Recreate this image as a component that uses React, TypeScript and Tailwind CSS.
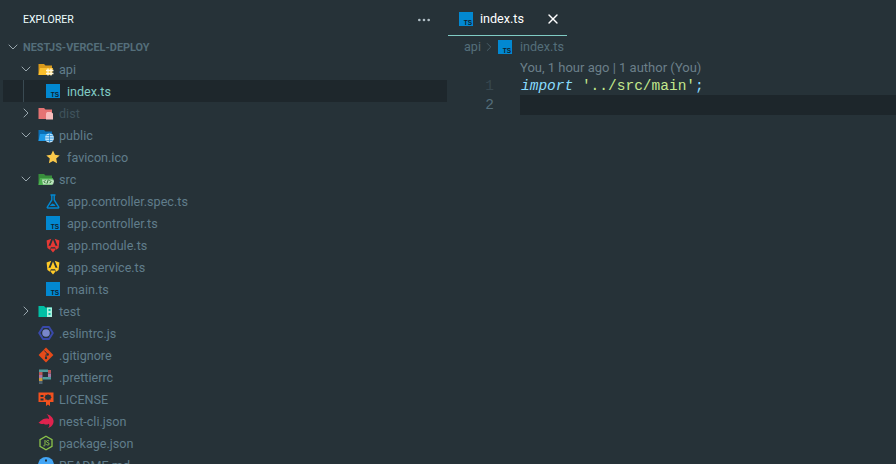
import { ChevronDown, ChevronRight, Ellipsis, X } from "lucide-react";
import type { ReactNode } from "react";

const TsIcon = ({ size = 14 }: { size?: number }) => (
  <svg width={size} height={size} viewBox="0 0 14 14">
    <rect width="14" height="14" fill="#0288d1" />
    <text x="13" y="12.5" textAnchor="end" fontSize="6.5" fontWeight="700" fontFamily="Liberation Sans, sans-serif" fill="#10222e">
      TS
    </text>
  </svg>
);

const Folder = ({ color, back, children }: { color: string; back?: string; children?: ReactNode }) => (
  <svg width="16" height="16" viewBox="0 0 16 16">
    <path d="M0.500 3h5.500l1.500 1.500H14V14H.5z" fill={back ?? color} />
    {back && <path d="M0.500 14l1.500-7h13l-1 7z" fill={color} />}
    {children}
  </svg>
);

const AngularIcon = ({ color }: { color: string }) => (
  <svg width="14" height="15" viewBox="0 0 14 15">
    <path d="M5.300.8.600 2.500l.8 7.500L4 11.800l.9-2.500h4.200l.9 2.500 2.600-1.800.8-7.500L8.700.8 11.500 7.800H9.500L7 1.500 4.500 7.800H2.500z" fill={color} />
    <path d="M5.700 7.800 7 4.500l1.300 3.300zM4.800 10.600h4.400l.3.900L7 14.400l-2.500-2.900z" fill={color} />
  </svg>
);

const icons: Record<string, ReactNode> = {
  api: (
    <Folder color="#fbc02d" back="#d99a1c">
      <path d="M8 9.500h7.500M8 12.500h7.500M10 7.500v7M13 7.500v7" stroke="#fff6dc" strokeWidth="1.300" />
    </Folder>
  ),
  dist: (
    <Folder color="#e57373">
      <path d="M8 8.500l1-1.500h4l2 1.500V14.500H8z" fill="#f7bcbc" />
    </Folder>
  ),
  public: (
    <Folder color="#1e9ae8" back="#0b6fb5">
      <circle cx="11.500" cy="11" r="4.500" fill="#bfe3f9" />
      <path d="M7 11h9M11.500 6.500v9M8.300 8.500h6.400M8.300 13.500h6.400" stroke="#1e88d5" strokeWidth=".7" />
    </Folder>
  ),
  src: (
    <Folder color="#4caf50" back="#388e3c">
      <path d="M4 8.500h11.500l.5 2-1 3H5z" fill="#b9e3bb" />
      <path d="M7.500 9.200l-1.500 1.500 1.500 1.500M11.500 9.200l1.500 1.500-1.500 1.500M10.300 8.700l-1.400 4" stroke="#1b5e20" strokeWidth=".9" fill="none" />
    </Folder>
  ),
  test: (
    <Folder color="#00bfa5">
      <rect x="9" y="4.500" width="5" height="9.500" fill="#a8f0de" />
      <path d="M10.500 6h2v2h-2zM10.500 10h2v2h-2z" fill="#00bfa5" />
    </Folder>
  ),
  star: (
    <svg width="14" height="14" viewBox="0 0 14 14">
      <path d="M7 .5l2 4.300 4.700.6-3.500 3.200.9 4.700L7 11l-4.100 2.300.9-4.700L.3 5.400 5 4.800z" fill="#fbc94a" />
    </svg>
  ),
  flask: (
    <svg width="14" height="15" viewBox="0 0 14 15">
      <path d="M4.500 1h5M5.800 1v5L1.300 13c-.3.500 0 1 .5 1h10.400c.5 0 .8-.5.500-1L8.200 6V1" stroke="#0288d1" strokeWidth="1.400" fill="none" />
      <path d="M4.500 11l2-1.500 2 1 1 1.500h-5.500z" fill="#0288d1" />
    </svg>
  ),
  eslint: (
    <svg width="16" height="16" viewBox="0 0 16 16">
      <path d="M5 2h6l3.800 6-3.800 6H5L1.200 8z" stroke="#3949ab" strokeWidth="2" fill="#263238" strokeLinejoin="round" />
      <circle cx="8" cy="8" r="3.800" fill="#7986cb" />
    </svg>
  ),
  git: (
    <svg width="16" height="16" viewBox="0 0 16 16">
      <path d="M8 .6l7.400 7.400L8 15.400.6 8z" fill="#e64a19" strokeLinejoin="round" />
      <path d="M6.300 3.500l3.200 3.500M8 7.500v4" stroke="#263238" strokeWidth="1" />
      <circle cx="9.700" cy="7.500" r="1.200" fill="#263238" />
      <circle cx="8" cy="11" r="1.200" fill="#263238" />
    </svg>
  ),
  prettier: (
    <svg width="16" height="16" viewBox="0 0 16 16">
      <path d="M1 .5h9v2.500H1z" fill="#4f9c9d" />
      <path d="M10 1h3v3.500h-3z" fill="#b95a5a" />
      <path d="M1 3h3.500v3H1z" fill="#b95a5a" />
      <path d="M10 4.500h3V8h-3z" fill="#a577a5" />
      <path d="M1 6h3.500v3H1z" fill="#a577a5" />
      <path d="M1 9h3.500v3H1z" fill="#c99c3c" />
      <path d="M4.500 8H13v2.500H4.500z" fill="#4f9c9d" />
      <path d="M1 12h3.500v3H1z" fill="#4d616e" />
    </svg>
  ),
  license: (
    <svg width="16" height="16" viewBox="0 0 16 16">
      <path d="M.5 1.500h15V11H12v4l-2-1.500L8 15v-4H.5z" fill="#f4511e" />
      <path d="M2.500 4h3v2h-3zM2.500 7.500h3v2h-3z" fill="#263238" />
      <path d="M10 3l1 1 1.500-.2.200 1.500 1 1-1 1-.2 1.500-1.500-.2-1 1-1-1-1.500.2-.2-1.500-1-1 1-1 .2-1.500L9 4z" fill="#263238" />
    </svg>
  ),
  nest: (
    <svg width="16" height="16" viewBox="0 0 16 16">
      <path d="M8.500 1c3.500.8 6.500 3.500 7 6.500.5 3.500-2 6.800-5.500 7.500 1.500-1.500 1.800-3 .8-4.300-1.500 1.200-3.800 1.200-5 0C4.500 11.500 2.500 11 .5 9.500c1.500-.3 2.500-2.200 4.500-3.200 2-1 4.500-.8 6-.3C11 4 10 2.300 8.500 1z" fill="#e0234e" />
    </svg>
  ),
  node: (
    <svg width="16" height="16" viewBox="0 0 16 16">
      <path d="M8 1.200l6 3.400v6.800l-6 3.400-6-3.400V4.600z" stroke="#8bc34a" strokeWidth="1.300" fill="none" />
      <path d="M7 5v5c0 1-1 1.200-1.700.7M11 6c-1-.8-2.500-.6-2.500.5 0 1.500 2.700.8 2.700 2.500 0 1.200-1.800 1.300-2.900.5" stroke="#8bc34a" strokeWidth="1" fill="none" />
    </svg>
  ),
  info: (
    <svg width="16" height="16" viewBox="0 0 16 16">
      <circle cx="8" cy="8" r="8" fill="#42a5f5" />
      <rect x="7" y="2.500" width="2" height="2" fill="#263238" />
    </svg>
  ),
};

type Row = {
  name: string;
  depth: 1 | 2;
  open?: boolean;
  icon: ReactNode;
  muted?: boolean;
  selected?: boolean;
};

const rows: Row[] = [
  { name: "api", depth: 1, open: true, icon: icons.api },
  { name: "index.ts", depth: 2, icon: <TsIcon />, selected: true },
  { name: "dist", depth: 1, open: false, icon: icons.dist, muted: true },
  { name: "public", depth: 1, open: true, icon: icons.public },
  { name: "favicon.ico", depth: 2, icon: icons.star },
  { name: "src", depth: 1, open: true, icon: icons.src },
  { name: "app.controller.spec.ts", depth: 2, icon: icons.flask },
  { name: "app.controller.ts", depth: 2, icon: <TsIcon /> },
  { name: "app.module.ts", depth: 2, icon: <AngularIcon color="#e53935" /> },
  { name: "app.service.ts", depth: 2, icon: <AngularIcon color="#ffca28" /> },
  { name: "main.ts", depth: 2, icon: <TsIcon /> },
  { name: "test", depth: 1, open: false, icon: icons.test },
  { name: ".eslintrc.js", depth: 1, icon: icons.eslint },
  { name: ".gitignore", depth: 1, icon: icons.git },
  { name: ".prettierrc", depth: 1, icon: icons.prettier },
  { name: "LICENSE", depth: 1, icon: icons.license },
  { name: "nest-cli.json", depth: 1, icon: icons.nest },
  { name: "package.json", depth: 1, icon: icons.node },
  { name: "README.md", depth: 1, icon: icons.info },
];

function TreeRow({ row }: { row: Row }) {
  const textColor = row.selected ? "text-[#80cbc4]" : row.muted ? "text-[#3f525c]" : "text-[#607d8b]";

  return (
    <div className={`relative ml-[3px] mr-px flex h-[22px] shrink-0 items-center ${row.selected ? "bg-[#1e272c]" : ""}`}>
      {row.depth === 1 ? (
        <div className="flex w-[35px] shrink-0 items-center pl-[15px]">
          {row.open === true && <ChevronDown size={16} strokeWidth={1.25} className="text-[#b0bec5]" />}
          {row.open === false && <ChevronRight size={16} strokeWidth={1.25} className="text-[#b0bec5]" />}
        </div>
      ) : (
        <div className="w-[43px] shrink-0" />
      )}
      {row.selected && <div className="absolute left-[20px] top-0 h-full w-px bg-[#3a4a52]" />}
      <div className="flex w-[21px] shrink-0 items-center">{row.icon}</div>
      <span className={`mt-[2px] text-[12.6px] leading-[18px] ${textColor}`}>{row.name}</span>
    </div>
  );
}

export default function App() {
  return (
    <div className="flex h-[464px] w-[896px] overflow-hidden bg-[#263238] font-['Roboto',sans-serif]">
      <aside className="flex w-[448px] shrink-0 flex-col">
        <div className="flex h-[36px] shrink-0 items-center justify-between pl-[23px] pr-[16px] pt-[3px]">
          <span className="text-[10.5px] text-[#eeffff]">EXPLORER</span>
          <Ellipsis size={16} className="text-[#b0bec5]" />
        </div>
        <div className="flex h-[22px] shrink-0 items-center pl-[5px]">
          <ChevronDown size={16} strokeWidth={1.25} className="mr-[2px] text-[#b0bec5]" />
          <span className="mt-[2px] text-[10.9px] font-bold text-[#546e7a]">NESTJS-VERCEL-DEPLOY</span>
        </div>
        {rows.map((row) => (
          <TreeRow key={row.name} row={row} />
        ))}
      </aside>

      <main className="flex min-w-0 flex-1 flex-col">
        <div className="flex h-[36px] shrink-0">
          <div className="flex w-[119px] items-center border-b border-[#80cbc4] pl-[11px] pt-[2px]">
            <TsIcon />
            <span className="ml-[7px] mt-[2px] text-[12.6px] text-white">index.ts</span>
            <X size={16} strokeWidth={2} className="ml-[21px] text-white" />
          </div>
        </div>
        <div className="flex h-[22px] shrink-0 items-center pl-[16px] text-[12.6px] text-[#546e7a]">
          <span>api</span>
          <ChevronRight size={14} strokeWidth={1.25} className="mx-[1.5px]" />
          <TsIcon />
          <span className="ml-[8px]">index.ts</span>
        </div>
        <div className="flex h-[17px] shrink-0 items-center pl-[72px] pt-[2px] text-[13px] text-[#6b7f89]">
          You, 1 hour ago | 1 author (You)
        </div>
        <div className="flex h-[20px] shrink-0 pt-px font-['Liberation_Mono',monospace] text-[14.5px] leading-[20px]">
          <div className="w-[58px] pr-[12px] text-right text-[#37474f]">1</div>
          <div className="w-[15px]" />
          <div className="text-[#89ddff]">
            <span className="italic text-[#89ddff]">import</span> <span className="text-[#c3e88d]">'../src/main'</span>
            <span>;</span>
          </div>
        </div>
        <div className="flex h-[20px] shrink-0 font-['Liberation_Mono',monospace] text-[14.5px] leading-[20px]">
          <div className="w-[58px] pr-[12px] text-right text-[#546e7a]">2</div>
          <div className="w-[14px]" />
          <div className="flex-1 bg-[#1d262b]" />
        </div>
      </main>
    </div>
  );
}
